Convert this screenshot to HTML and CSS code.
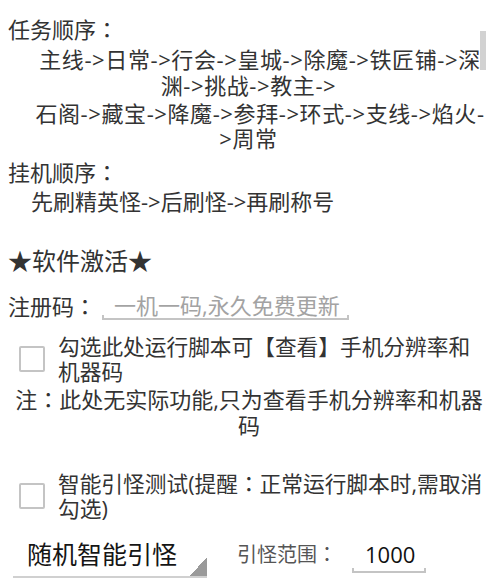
FILE: index.html
```html
<!DOCTYPE html>
<html>
<head>
    <title>脚本设置</title>
    <meta charset="UTF-8" />
    <link rel="stylesheet" href="styles.css">
</head>
<body>
    <div class="scrollbar"></div>

    <div class="sectionTitle">任务顺序<span class="colon">：</span></div>
    <div class="route routeMain">主线-&gt;日常-&gt;行会-&gt;皇城-&gt;除魔-&gt;铁匠铺-&gt;深渊-&gt;挑战-&gt;教主-&gt;</div>
    <div class="route routeExtra">石阁-&gt;藏宝-&gt;降魔-&gt;参拜-&gt;环式-&gt;支线-&gt;焰火-&gt;周常</div>

    <div class="sectionTitle hangTitle">挂机顺序<span class="colon">：</span></div>
    <div class="hang">先刷精英怪-&gt;后刷怪-&gt;再刷称号</div>

    <div class="heading">★软件激活★</div>

    <div class="regRow">
        <span class="regLabel">注册码<span class="colon">：</span></span>
        <div class="edit regEdit">
            <div class="editText hint">一机一码,永久免费更新</div>
            <div class="editLine"></div>
        </div>
    </div>

    <label class="checkRow firstCheck">
        <span class="box"></span>
        <span class="checkText">勾选此处运行脚本可【查看】手机分辨率和机器码</span>
    </label>
    <div class="note">注<span class="colon">：</span>此处无实际功能,只为查看手机分辨率和机器码</div>

    <label class="checkRow secondCheck">
        <span class="box"></span>
        <span class="checkText">智能引怪测试(提醒：正常运行脚本时,需取消勾选)</span>
    </label>

    <div class="bottomRow">
        <div class="spinner">
            <span class="spinnerText">随机智能引怪</span>
            <span class="triangle"></span>
        </div>
        <span class="rangeLabel">引怪范围<span class="colon">：</span></span>
        <div class="edit rangeEdit">
            <div class="editText">1000</div>
            <div class="editLine"></div>
        </div>
    </div>
</body>
</html>
```

FILE: styles.css
```css
body
{
    margin: 0;
    padding: 0 3px 0 8px;
    position: relative;
    background-color: #fff;
    color: #333;
    font-family: "Open Sans", "Noto Sans CJK SC", sans-serif;
    font-size: 22px;
}

/* full-width colon sits centred in its cell, as on the device */
.colon
{
    font-family: "Noto Sans CJK JP", sans-serif;
}

.scrollbar
{
    position: absolute;
    top: 31px;
    right: 1px;
    width: 6px;
    height: 39px;
    background-color: #d2d2d2;
}

.sectionTitle
{
    margin-top: 15px;
    line-height: 26px;
}

.route
{
    margin-right: -3px;
    padding-left: 2px;
    text-align: center;
    text-indent: 23px;
    letter-spacing: 0.6px;
    line-height: 26px;
}

.routeMain
{
    margin-top: 4px;
}

.routeExtra
{
    margin-top: 3px;
    line-height: 25px;
}

.hangTitle
{
    margin-top: 7px;
}

.hang
{
    margin-top: 3px;
    padding-left: 23px;
    line-height: 26px;
}

.heading
{
    margin-top: 32px;
    font-size: 24px;
    line-height: 30px;
}

.regRow
{
    display: flex;
    margin-top: 10px;
}

.regLabel
{
    width: 94px;
    padding-top: 4px;
    line-height: 30px;
}

.edit
{
    display: flex;
    flex-direction: column;
}

.regEdit
{
    width: 247px;
    padding-top: 4px;
}

.editText
{
    padding-left: 12px;
    line-height: 30px;
}

.hint
{
    color: #a3a3a3;
}

.editLine
{
    height: 3px;
    margin-top: -5px;
    border: 2px solid #c4c4c4;
    border-top: none;
}

.checkRow
{
    display: flex;
    align-items: center;
}

.firstCheck
{
    margin-top: 13px;
}

.secondCheck
{
    margin-top: 33px;
}

.secondCheck .checkText
{
    font-family: "Open Sans", "Noto Sans CJK JP", sans-serif;
}

.box
{
    flex-shrink: 0;
    width: 26px;
    height: 26px;
    box-sizing: border-box;
    margin: 0 13px 0 11px;
    border: 2px solid #c4c4c4;
    border-radius: 2px;
}

.checkText
{
    font-size: 21.7px;
    line-height: 25px;
}

.note
{
    margin-top: 1px;
    padding-left: 6px;
    text-align: center;
    line-height: 26px;
}

.bottomRow
{
    display: flex;
    margin-top: 8px;
}

.spinner
{
    display: flex;
    width: 194px;
    margin-left: 5px;
    padding: 3px 0 0 14px;
    box-sizing: border-box;
    border-bottom: 2px solid #d0d0d0;
}

.spinnerText
{
    color: #151515;
    font-size: 25px;
    line-height: 44px;
}

.triangle
{
    align-self: flex-end;
    width: 17px;
    height: 19px;
    margin-left: auto;
    background: linear-gradient(to bottom right, transparent 50%, #9a9a9a 50%);
}

.rangeLabel
{
    margin-left: 30px;
    padding-top: 3px;
    color: #555;
    font-size: 20px;
    line-height: 44px;
}

.rangeEdit
{
    width: 74px;
    margin-left: 15px;
    padding-top: 5px;
}

.rangeEdit .editText
{
    padding-left: 13px;
    color: #111;
    line-height: 40px;
}

.rangeEdit .editLine
{
    margin-top: -6px;
}
```
